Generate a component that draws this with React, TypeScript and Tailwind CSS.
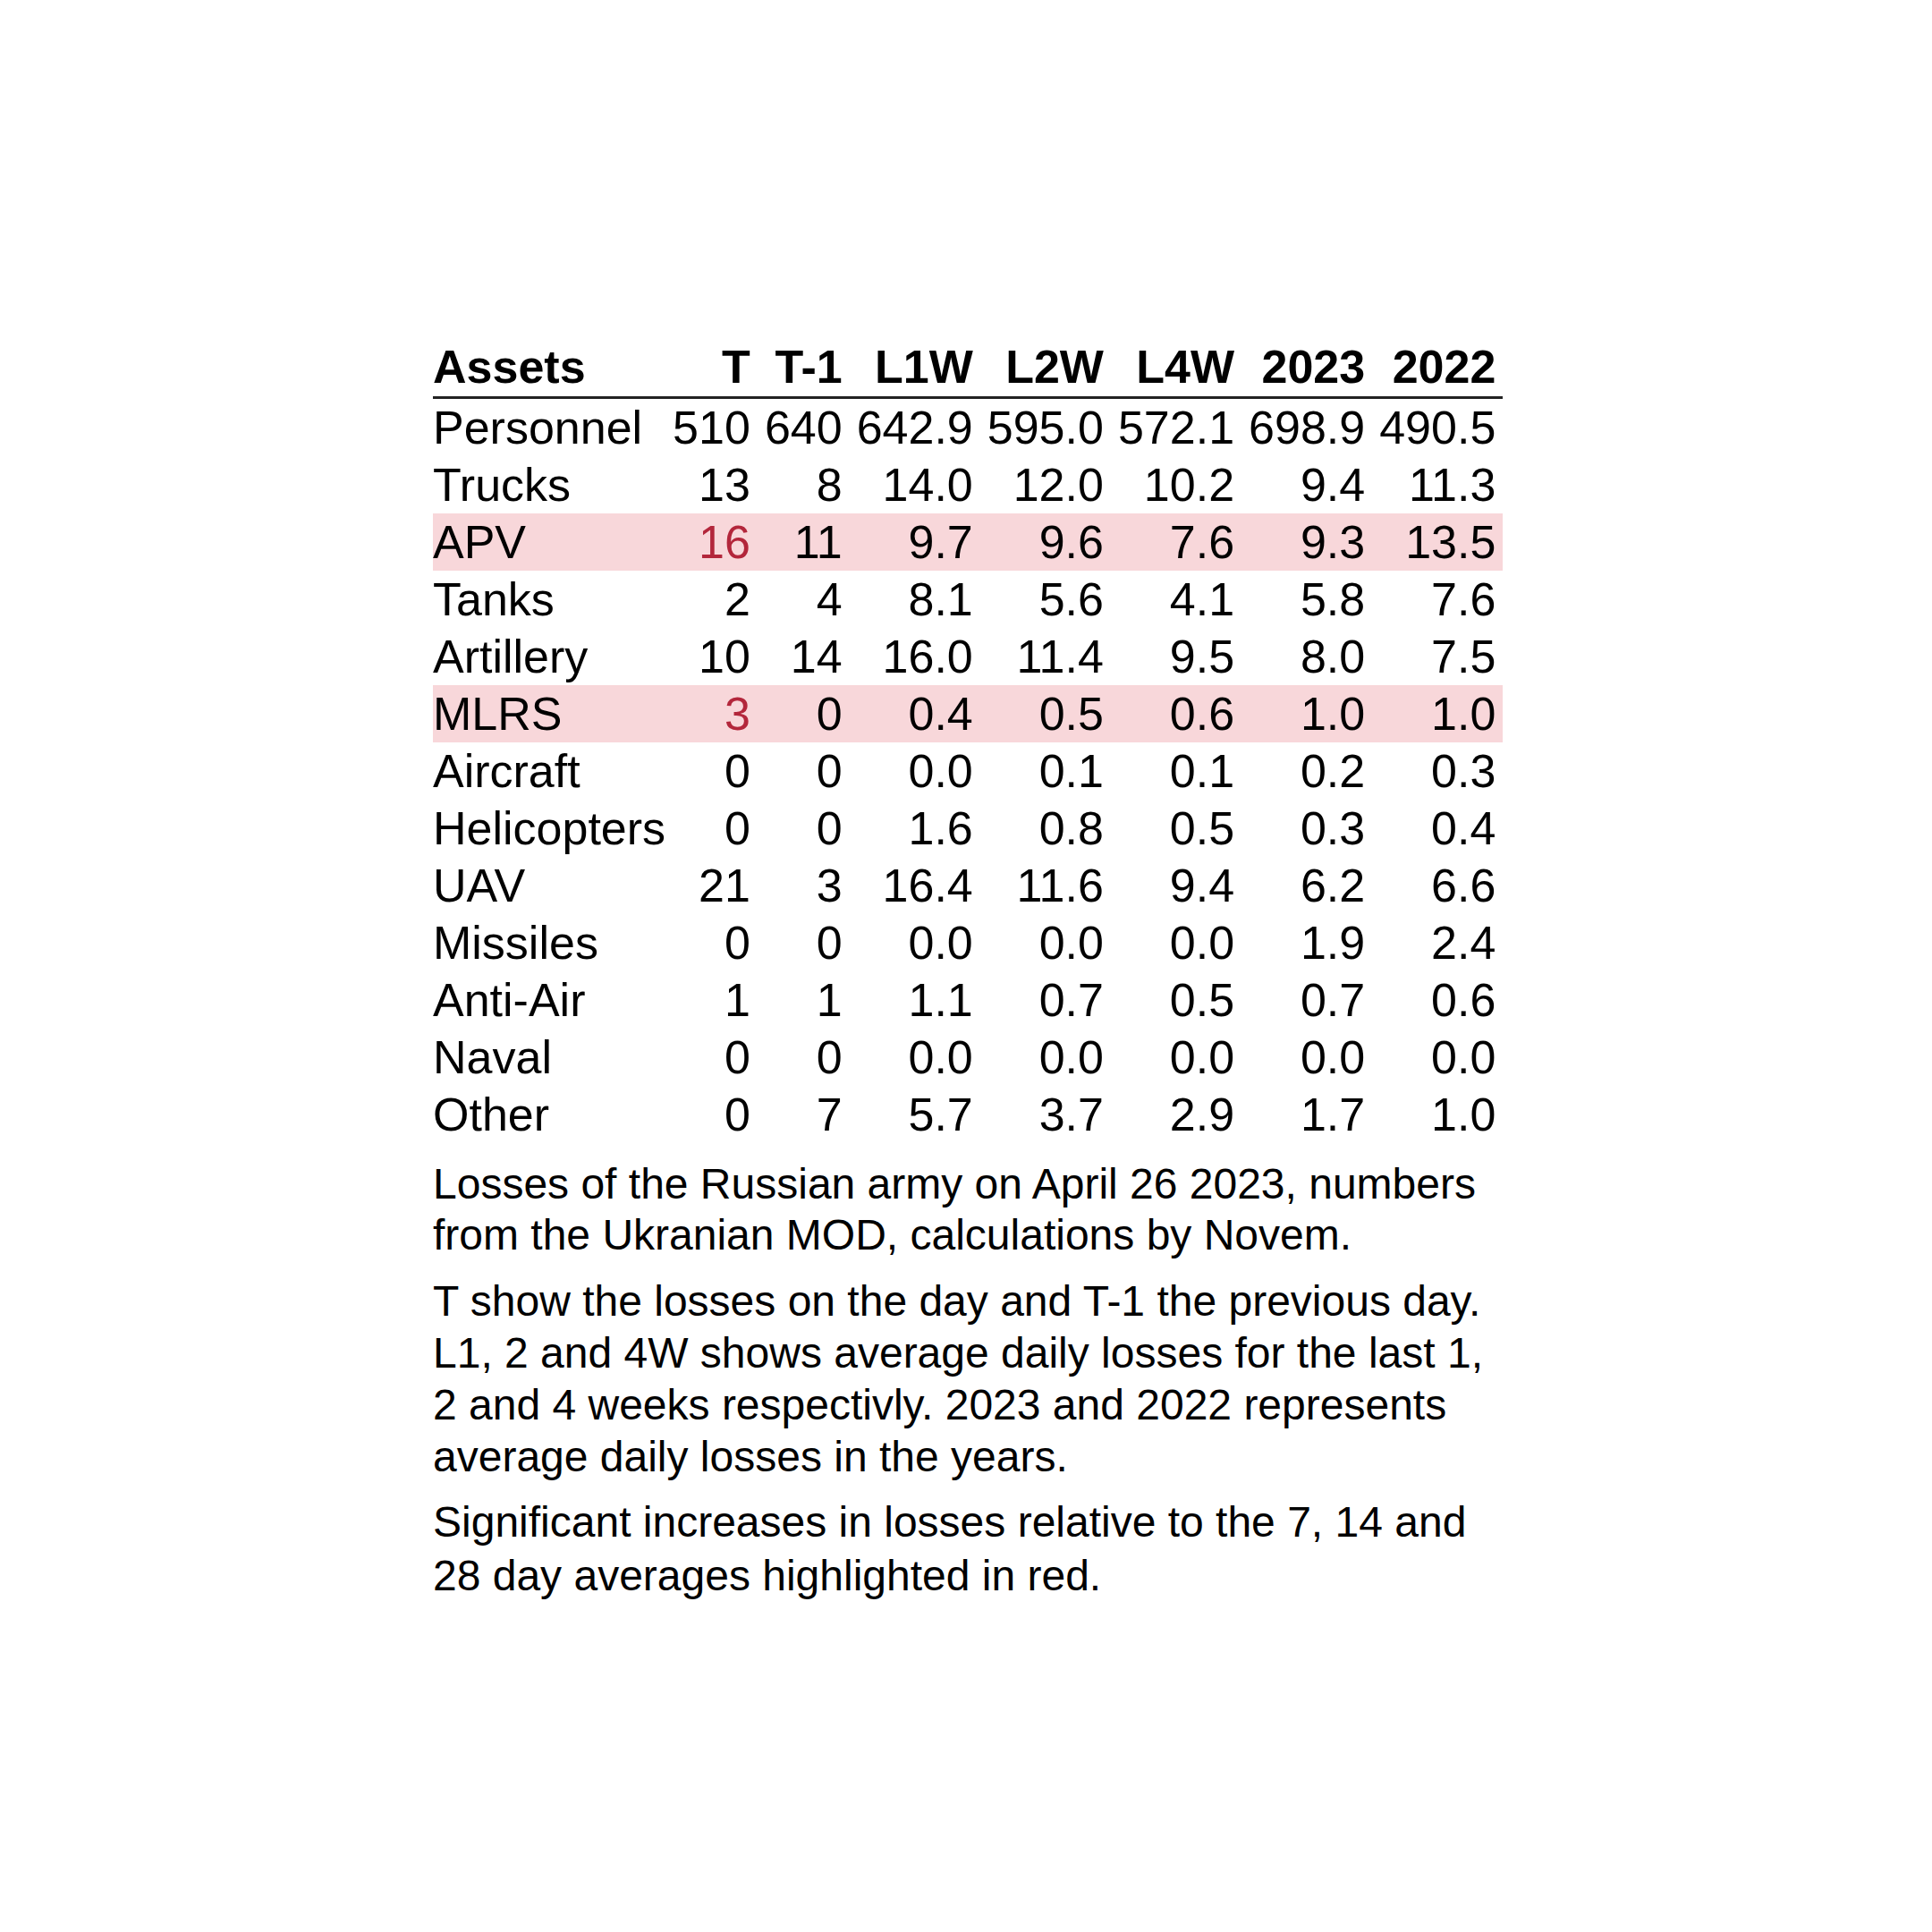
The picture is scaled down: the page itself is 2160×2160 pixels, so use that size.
const columns = ["Assets", "T", "T-1", "L1W", "L2W", "L4W", "2023", "2022"];

type Row = {
  asset: string;
  values: string[];
  flagged?: boolean;
};

const rows: Row[] = [
  { asset: "Personnel", values: ["510", "640", "642.9", "595.0", "572.1", "698.9", "490.5"] },
  { asset: "Trucks", values: ["13", "8", "14.0", "12.0", "10.2", "9.4", "11.3"] },
  { asset: "APV", values: ["16", "11", "9.7", "9.6", "7.6", "9.3", "13.5"], flagged: true },
  { asset: "Tanks", values: ["2", "4", "8.1", "5.6", "4.1", "5.8", "7.6"] },
  { asset: "Artillery", values: ["10", "14", "16.0", "11.4", "9.5", "8.0", "7.5"] },
  { asset: "MLRS", values: ["3", "0", "0.4", "0.5", "0.6", "1.0", "1.0"], flagged: true },
  { asset: "Aircraft", values: ["0", "0", "0.0", "0.1", "0.1", "0.2", "0.3"] },
  { asset: "Helicopters", values: ["0", "0", "1.6", "0.8", "0.5", "0.3", "0.4"] },
  { asset: "UAV", values: ["21", "3", "16.4", "11.6", "9.4", "6.2", "6.6"] },
  { asset: "Missiles", values: ["0", "0", "0.0", "0.0", "0.0", "1.9", "2.4"] },
  { asset: "Anti-Air", values: ["1", "1", "1.1", "0.7", "0.5", "0.7", "0.6"] },
  { asset: "Naval", values: ["0", "0", "0.0", "0.0", "0.0", "0.0", "0.0"] },
  { asset: "Other", values: ["0", "7", "5.7", "3.7", "2.9", "1.7", "1.0"] },
];

const LossTable = () => {
  return (
    <table className="border-separate border-spacing-0 text-[52px] text-black">
      <thead>
        <tr>
          {columns.map((col, i) => (
            <th
              key={col}
              className={
                i === 0
                  ? "px-0 pb-[4px] text-left font-bold leading-[58px] border-b-[3px] border-[#222222] whitespace-nowrap"
                  : "px-[8px] pb-[4px] text-right font-bold leading-[58px] border-b-[3px] border-[#222222] whitespace-nowrap"
              }
            >
              {col}
            </th>
          ))}
        </tr>
      </thead>
      <tbody>
        {rows.map((row) => (
          <tr key={row.asset} className={row.flagged ? "bg-[#f8d7da]" : ""}>
            <td className="px-0 text-left leading-[64px] whitespace-nowrap">{row.asset}</td>
            {row.values.map((v, i) => (
              <td
                key={i}
                className={
                  row.flagged && i === 0
                    ? "px-[8px] text-right leading-[64px] whitespace-nowrap text-[#b3263b]"
                    : "px-[8px] text-right leading-[64px] whitespace-nowrap"
                }
              >
                {v}
              </td>
            ))}
          </tr>
        ))}
      </tbody>
    </table>
  );
};

export default function App() {
  return (
    <div className="min-h-screen bg-white pt-[381px] pl-[484px] font-['Liberation_Sans',Arial,sans-serif] text-black">
      <LossTable />
      <div className="mt-[17px] w-[1200px] text-[48px] leading-[57px]">
        <p>
          Losses of the Russian army on April 26 2023, numbers from the Ukranian MOD, calculations by Novem.
        </p>
        <p className="mt-[17px] leading-[58px]">
          T show the losses on the day and T-1 the previous day. L1, 2 and 4W shows average daily losses for the
          last 1, 2 and 4 weeks respectivly. 2023 and 2022 represents average daily losses in the years.
        </p>
        <p className="mt-[14px] leading-[60px]">
          Significant increases in losses relative to the 7, 14 and 28 day averages highlighted in red.
        </p>
      </div>
    </div>
  );
}
